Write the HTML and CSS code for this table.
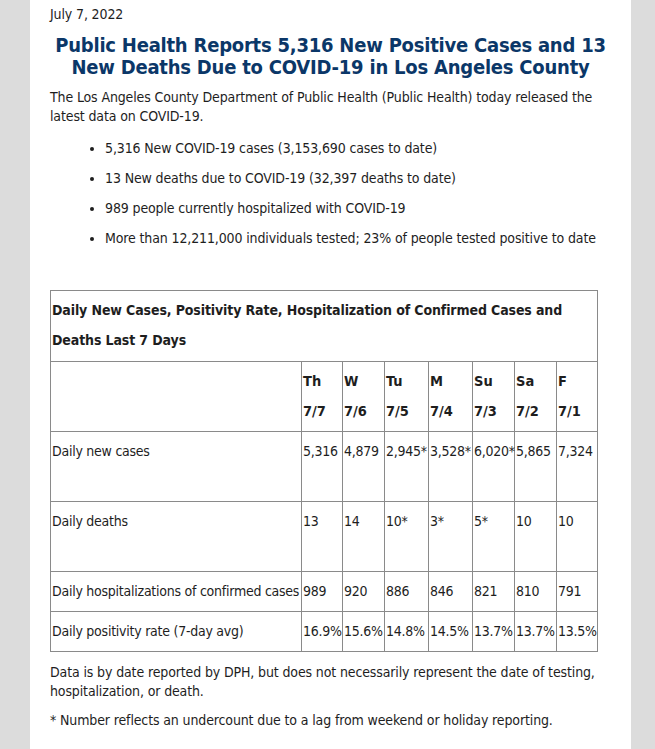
FILE: index.html
```html
<!DOCTYPE html>
<html lang="en">
<head>
<meta charset="utf-8">
<title>LA County COVID-19 Report</title>
<link rel="stylesheet" href="styles.css">
</head>
<body>
<main class="page">
  <p class="date">July 7, 2022</p>
  <h1 class="title">Public Health Reports 5,316 New Positive Cases and 13 New Deaths Due to COVID-19 in Los Angeles County</h1>
  <p class="intro">The Los Angeles County Department of Public Health (Public Health) today released the latest data on COVID-19.</p>
  <ul class="facts">
    <li>5,316 New COVID-19 cases (3,153,690 cases to date)</li>
    <li>13 New deaths due to COVID-19 (32,397 deaths to date)</li>
    <li>989 people currently hospitalized with COVID-19</li>
    <li>More than 12,211,000 individuals tested; 23% of people tested positive to date</li>
  </ul>
  <table class="data">
    <colgroup>
      <col class="c-label">
      <col class="c-th"><col class="c-w"><col class="c-tu"><col class="c-m"><col class="c-su"><col class="c-sa"><col class="c-f">
    </colgroup>
    <tr>
      <th colspan="8" class="caption">Daily New Cases, Positivity Rate, Hospitalization of Confirmed Cases and Deaths Last 7 Days</th>
    </tr>
    <tr class="head">
      <td></td>
      <th>Th<br>7/7</th>
      <th>W<br>7/6</th>
      <th>Tu<br>7/5</th>
      <th>M<br>7/4</th>
      <th>Su<br>7/3</th>
      <th>Sa<br>7/2</th>
      <th>F<br>7/1</th>
    </tr>
    <tr class="tall">
      <td>Daily new cases</td>
      <td>5,316</td><td>4,879</td><td>2,945*</td><td>3,528*</td><td>6,020*</td><td>5,865</td><td>7,324</td>
    </tr>
    <tr class="tall">
      <td>Daily deaths</td>
      <td>13</td><td>14</td><td>10*</td><td>3*</td><td>5*</td><td>10</td><td>10</td>
    </tr>
    <tr>
      <td>Daily hospitalizations of confirmed cases</td>
      <td>989</td><td>920</td><td>886</td><td>846</td><td>821</td><td>810</td><td>791</td>
    </tr>
    <tr>
      <td>Daily positivity rate (7-day avg)</td>
      <td>16.9%</td><td>15.6%</td><td>14.8%</td><td>14.5%</td><td>13.7%</td><td>13.7%</td><td>13.5%</td>
    </tr>
  </table>
  <p class="note">Data is by date reported by DPH, but does not necessarily represent the date of testing, hospitalization, or death.</p>
  <p class="note">* Number reflects an undercount due to a lag from weekend or holiday reporting.</p>
</main>
</body>
</html>
```
FILE: styles.css
```css
html, body {
  margin: 0;
  padding: 0;
}
body {
  background: #dcdcdc;
  font-family: "DejaVu Sans Condensed", "Liberation Sans", sans-serif;
  font-stretch: condensed;
  font-size: 14px;
  letter-spacing: -0.13px;
  color: #1e1e1e;
}
.page {
  box-sizing: border-box;
  width: 601px;
  min-height: 749px;
  margin-left: 30px;
  padding: 4px 20px 20px;
  background: #ffffff;
}
.date {
  margin: 0;
  line-height: 20px;
}
.title {
  margin: 10px 0 0;
  font-size: 20px;
  line-height: 22px;
  font-weight: bold;
  letter-spacing: -0.22px;
  text-align: center;
  color: #0b3768;
}
.intro {
  margin: 10px 0 0;
  line-height: 19px;
}
.facts {
  margin: 7px 0 0;
  padding-left: 55px;
  line-height: 30px;
}
.data {
  margin-top: 37px;
  border-collapse: collapse;
  table-layout: fixed;
  width: 548px;
}
.c-label { width: 251px; }
.c-th { width: 41px; }
.c-w { width: 42px; }
.c-tu { width: 44px; }
.c-m { width: 44px; }
.c-su { width: 42px; }
.c-sa { width: 42px; }
.c-f { width: 41px; }
.data th,
.data td {
  border: 1px solid #8a8a8a;
  padding: 4px 0 5px 1px;
  line-height: 30px;
  vertical-align: top;
  text-align: left;
  white-space: nowrap;
  letter-spacing: -0.25px;
}
.data th {
  font-weight: bold;
  letter-spacing: -0.12px;
}
.data .head th {
  font-size: 14.5px;
  letter-spacing: 0;
}
.data .caption {
  white-space: normal;
  padding-bottom: 6px;
}
.data tr.tall {
  height: 70px;
}
.note {
  margin: 11px 0 0;
  line-height: 19px;
}
.note + .note {
  margin-top: 10px;
}
```
